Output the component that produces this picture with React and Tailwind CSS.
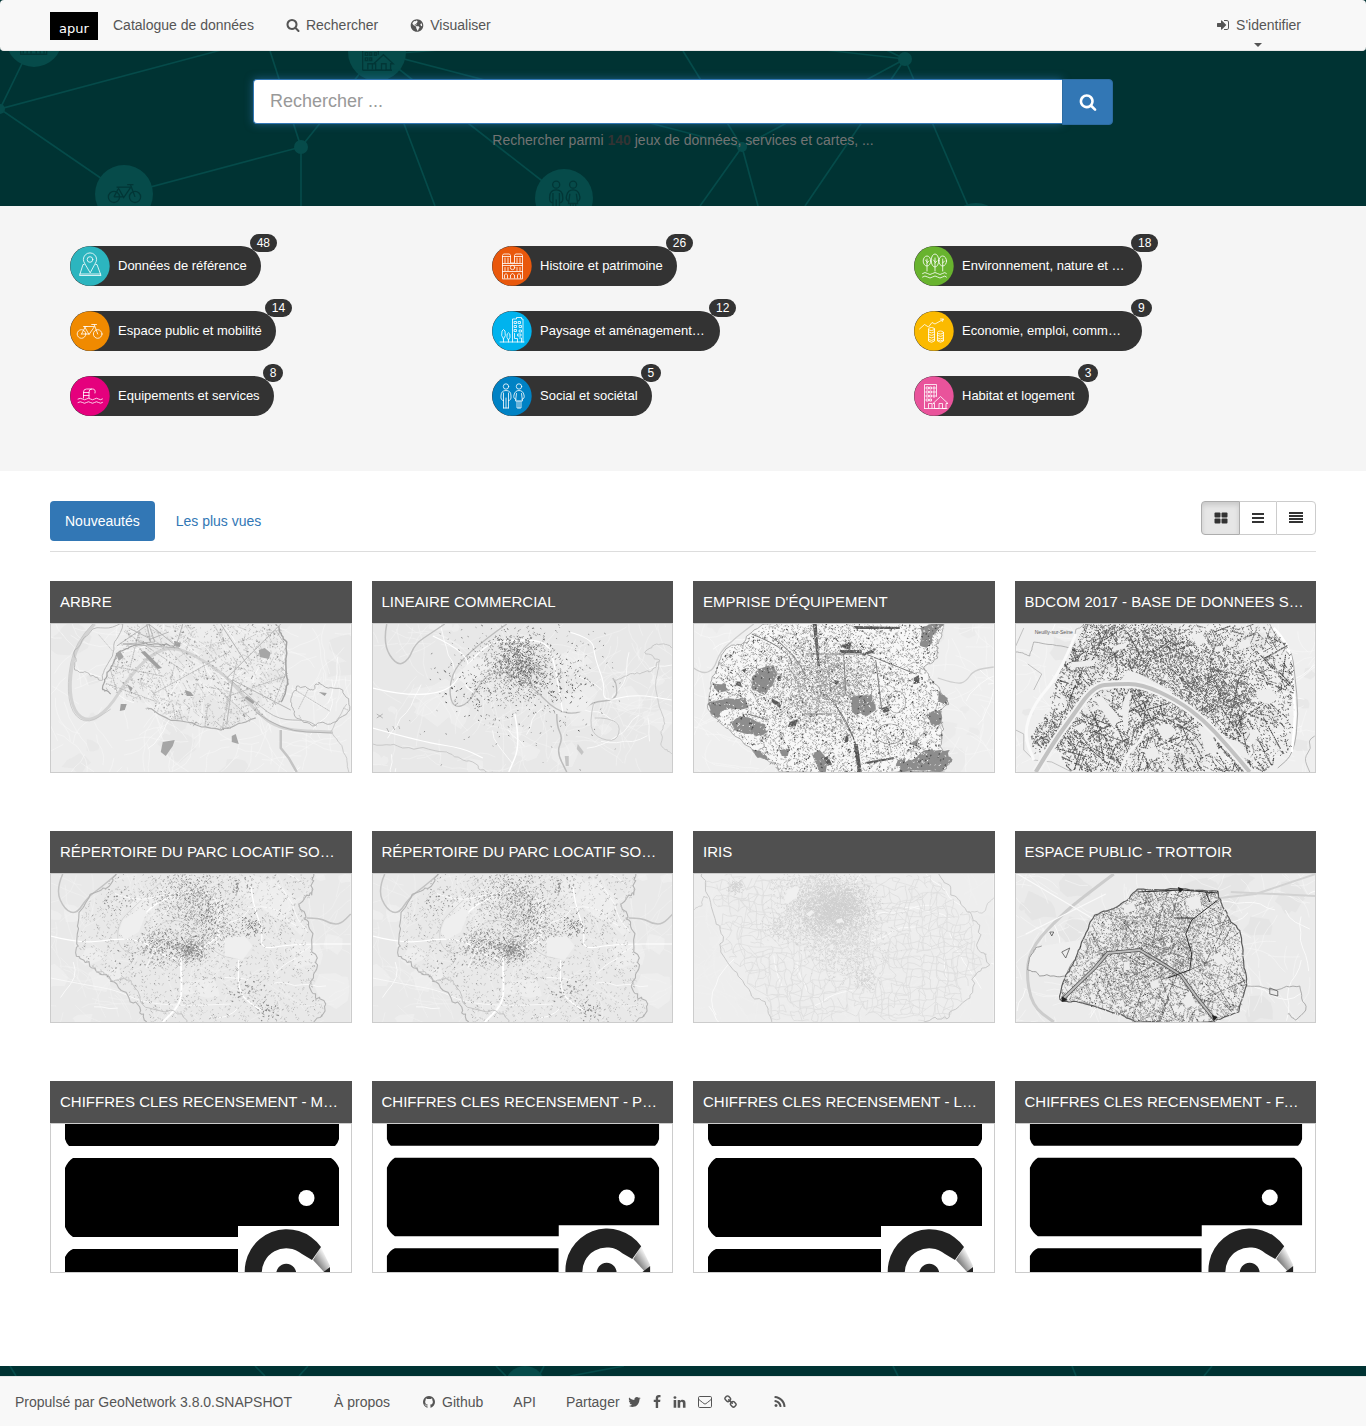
import React from "react";
import { FaGlobeAmericas } from "react-icons/fa";

/* ---------- glyph icons ---------- */

const GLYPHS = {
  search:
    "M1216 832q0-185-131.5-316.5t-316.5-131.5-316.5 131.5-131.5 316.5 131.5 316.5 316.5 131.5 316.5-131.5 131.5-316.5zm512 832q0 52-38 90t-90 38q-54 0-90-38l-343-342q-179 124-399 124-143 0-273.5-55.5t-225-150-150-225-55.5-273.5 55.5-273.5 150-225 225-150 273.5-55.5 273.5 55.5 225 150 150 225 55.5 273.5q0 220-124 399l343 343q37 37 37 90z",
  signIn:
    "M1312 896q0 26-19 45l-544 544q-19 19-45 19t-45-19-19-45v-288h-448q-26 0-45-19t-19-45v-384q0-26 19-45t45-19h448v-288q0-26 19-45t45-19 45 19l544 544q19 19 19 45zm352-352v704q0 119-84.5 203.5t-203.5 84.5h-320q-13 0-22.5-9.5t-9.5-22.5q0-4-1-20t-.5-26.5 3-23.5 10-19.5 20.5-6.5h320q66 0 113-47t47-113v-704q0-66-47-113t-113-47h-312l-11.5-1-11.5-3-8-5.5-7-9-2-13.5q0-4-1-20t-.5-26.5 3-23.5 10-19.5 20.5-6.5h320q119 0 203.5 84.5t84.5 203.5z",
  github:
    "M896 128q209 0 385.5 103t279.5 279.5 103 385.5q0 251-146.5 451.5t-378.5 277.5q-27 5-40-7t-13-30q0-3 .5-76.5t.5-134.5q0-97-52-142 57-6 102.5-18t94-39 81-66.5 53-105 20.5-150.5q0-119-79-206 37-91-8-204-28-9-81 11t-92 44l-38 24q-93-26-192-26t-192 26q-16-11-42.5-27t-83.5-38.5-85-13.5q-45 113-8 204-79 87-79 206 0 85 20.5 150t52.5 105 80.5 67 94 39 102.5 18q-39 36-49 103-21 10-45 15t-57 5-65.5-21.5-55.5-62.5q-19-32-48.5-52t-49.5-24l-20-3q-21 0-29 4.5t-5 11.5 9 14 13 12l7 5q22 10 43.5 38t31.5 51l10 23q13 38 44 61.5t67 30 69.5 7 55.5-3.5l23-4q0 38 .5 88.5t.5 54.5q0 18-13 30t-40 7q-232-77-378.5-277.5t-146.5-451.5q0-209 103-385.5t279.5-279.5 385.5-103z",
  twitter:
    "M1684 408q-67 98-162 167 1 14 1 42 0 130-38 259.5t-115.5 248.5-184.5 210.5-258 146-323 54.5q-271 0-496-145 35 4 78 4 225 0 401-138-105-2-188-64.5t-114-159.5q33 5 61 5 43 0 85-11-112-23-185.5-111.5t-73.5-205.5v-4q68 38 146 41-66-44-105-115t-39-154q0-88 44-163 121 149 294.5 238.5t371.5 99.5q-8-38-8-74 0-134 94.5-228.5t228.5-94.5q140 0 236 102 109-21 205-78-37 115-142 178 93-10 186-50z",
  facebook:
    "M1343 12v264h-157q-86 0-116 36t-30 108v189h293l-39 296h-254v759h-306v-759h-255v-296h255v-218q0-186 104-288.5t277-102.5q147 0 228 12z",
  linkedin:
    "M477 625v991h-330v-991h330zm21-306q1 73-50.5 122t-135.5 49h-2q-82 0-132-49t-50-122q0-74 51.5-122.5t134.5-48.5 133 48.5 51 122.5zm1166 729v568h-329v-530q0-105-40.5-164.5t-126.5-59.5q-63 0-105.5 34.5t-63.5 85.5q-11 30-11 81v553h-329q2-399 2-647t-1-296l-1-48h329v144h-2q20-32 41-56t56.5-52 87-43.5 114.5-15.5q171 0 275 113.5t104 332.5z",
  link: "M1520 1216q0-40-28-68l-208-208q-28-28-68-28-42 0-72 32 3 3 19 18.5t21.5 21.5 15 19 13 25.5 3.5 27.5q0 40-28 68t-68 28q-15 0-27.5-3.5t-25.5-13-19-15-21.5-21.5-18.5-19q-33 31-33 73 0 40 28 68l206 207q27 27 68 27 40 0 68-26l147-146q28-28 28-67zm-703-705q0-40-28-68l-206-207q-28-28-68-28-39 0-68 27l-147 146q-28 28-28 67 0 40 28 68l208 208q27 27 68 27 42 0 72-31-3-3-19-18.5t-21.5-21.5-15-19-13-25.5-3.5-27.5q0-40 28-68t68-28q15 0 27.5 3.5t25.5 13 19 15 21.5 21.5 18.5 19q33-31 33-73zm895 705q0 120-85 203l-147 146q-83 83-203 83-121 0-204-85l-206-207q-83-83-83-203 0-123 88-209l-88-88q-86 88-208 88-120 0-204-84l-208-208q-84-84-84-204t85-203l147-146q83-83 203-83 121 0 204 85l206 207q83 83 83 203 0 123-88 209l88 88q86-88 208-88 120 0 204 84l208 208q84 84 84 204z",
  rss: "M576 1344q0 80-56 136t-136 56-136-56-56-136 56-136 136-56 136 56 56 136zm512 123q2 28-17 48-18 21-47 21h-135q-25 0-43-16.5t-20-41.5q-22-229-184.5-391.5t-391.5-184.5q-25-2-41.5-20t-16.5-43v-135q0-29 21-47 17-17 43-17h5q160 13 306 80.5t259 181.5q114 113 181.5 259t80.5 306zm512 2q2 27-18 47-18 20-46 20h-143q-26 0-44.5-17.5t-19.5-42.5q-12-215-101-408.5t-231.5-336-336-231.5-408.5-102q-25-1-42.5-19.5t-17.5-43.5v-143q0-28 20-46 18-18 44-18h3q262 13 501.5 120t425.5 294q187 186 294 425.5t120 501.5z",
};

function Glyph({ name, className = "h-[14px] w-[18px]", box = "0 0 1792 1792" }) {
  return (
    <svg viewBox={box} className={`${className} shrink-0`} fill="currentColor" aria-hidden="true">
      <path d={GLYPHS[name]} />
    </svg>
  );
}

/* ---------- category drawings, 40 x 40 ---------- */

const DRAWINGS = {
  reference: (
    <>
      <path d="M20 26.500 15 18q-1.600-2.500-1.600-4.500a6.600 6.600 0 0 1 13.200 0q0 2-1.600 4.500z" />
      <circle cx="20" cy="13.500" r="2.800" />
      <path d="M14 18.500h-1L9.500 29.500h21.500L27 18.500h-1.200M10 28h20.500" />
    </>
  ),
  bike: (
    <>
      <circle cx="11.500" cy="23" r="4.300" />
      <circle cx="27.700" cy="23" r="4.300" />
      <path d="M11.500 23l4-7.500h9l-5.500 8-4.500-8M11.500 23h7.500M27.700 23l-3.500-9.500h-2.500M13.500 15.500h3.500M24.200 13.500h2.300" />
    </>
  ),
  pool: (
    <>
      <path d="M13.500 22v-6q0-3 3-3h6q3.500 0 2.500 4M19 22v-6q0-3 2.500-3M13.500 16.500h5.500M13.500 19.500h5.500" />
      <path d="M8 23q2.500-1.500 4.500 0t4 0 4 0 4 0 4 0 4 0M8 26.500q2.500-1.500 4.500 0t4 0 4 0 4 0 4 0 4 0" />
    </>
  ),
  church: (
    <>
      <path d="M10.500 32.500V9.500l1-1.500h6l1 1.500V17h4V9.500l1-1.500h6l1 1.500v23zM10.500 17.500h20M10.500 19.500h20M10.500 25.500h20M10.500 10.500h8M22.500 10.500h8M13 12v5M16 12v5M25 12v5M28 12v5" />
      <circle cx="20.500" cy="21.500" r="2.200" />
      <path d="M12.500 32v-3q1.500-3 3 0v3M18.500 32v-3q2-3 4 0v3M25.500 32v-3q1.500-3 3 0v3M13 21.500v3M16 21.500v3M25 21.500v3M28 21.500v3" />
    </>
  ),
  building: (
    <>
      <path d="M8 31h24M20.500 31V8h4V6.500h5V8H31v23" />
      <path d="M22.500 10.500h2v2h-2zM26.500 10.500h2v2h-2zM22.500 14.500h2v2h-2zM27.500 14.500h2v2h-2zM22.500 18.500h2v2h-2zM27.500 19h2v2h-2zM26 23h3v2h-3zM22.500 22.500v5h3v3.500M27.500 27h2v4" />
      <path d="M11.500 31v-3q-3-3-1.500-8 1.500-3 3 0 1.500 5-1.500 8M16.500 31v-2q-2.500-2.500-1.300-6 1.300-2.500 2.600 0 1.200 3.500-1.300 6" />
    </>
  ),
  people: (
    <>
      <circle cx="14" cy="10.500" r="2.700" />
      <circle cx="27" cy="10.500" r="2.700" />
      <path d="M11.500 32V17M16.500 32V17M14 22v10M11.500 32h5M11.500 24.500q-3 0-2.500-4.500 0-5.500 5-5.500t5 5.500q.5 4.500-2.500 4.500" />
      <path d="M25 25v7h4v-7M27 25v7M24.500 17.500l-1 7.500h7l-1-7.500M24 23.500q-3-1-2-4.500 1-4.500 5-4.500t5 4.500q1 3.500-2 4.500" />
    </>
  ),
  trees: (
    <>
      <ellipse cx="13" cy="15" rx="3.800" ry="5" />
      <ellipse cx="21" cy="14.500" rx="3.800" ry="6.500" />
      <ellipse cx="28.700" cy="15" rx="3.800" ry="5" />
      <path d="M13 13v12M21 12v13M28.700 13v12M13 17l1.800-2M21 17l1.800-2M28.700 17l1.800-2M13 16l-1.500-2M21 16l-1.500-2" />
      <path d="M8.500 27.500q2.500-2 5 0t5 0 5 0 5 0 4 0M8.500 31q2.500-2 5 0t5 0 5 0 5 0 4 0" />
    </>
  ),
  economy: (
    <>
      <path d="M5.500 18l5-4.500 4 2.500 3.500-4.500 3 1.500 8-4.500M26.500 8h3l-1.200 2.500" />
      <path d="M14.500 18.500v11.500q3 2.500 6 0V18.500M23.500 22v8q3 2.500 6 0v-8" />
      <ellipse cx="17.500" cy="18" rx="3" ry="1.500" />
      <ellipse cx="26.500" cy="21.500" rx="3" ry="1.500" />
      <path d="M14.500 21q3 2 6 0M14.500 23.500q3 2 6 0M14.500 26q3 2 6 0M14.500 28.500q3 2 6 0M23.500 24.500q3 2 6 0M23.500 27q3 2 6 0M23.500 29q3 2 6 0" />
    </>
  ),
  housing: (
    <>
      <path d="M10.500 32.500V8.500h12v12M10.500 32.500H33" />
      <path d="M12.500 11h2v2h-2zM16 11h1.500v2H16zM19.500 11h1.500v2h-1.500zM12.500 15h2v2h-2zM16 15h1.500v2H16zM19.500 15h1.500v2h-1.500zM12.500 19h2v2h-2zM16 19h1.500v2H16zM19.500 19h1.500v2h-1.500zM12.500 23h2v2h-2zM16 23h1.500v2H16z" />
      <path d="M19 27.500l7.500-7 7.500 7h-2v5h-3.500v-5H25v5h-4.500v-5zM14.500 32v-4.500h3.500v4.500" />
    </>
  ),
};

function Drawing({ name, color }) {
  return (
    <svg viewBox="0 0 40 40" className="size-10 shrink-0" aria-hidden="true">
      <circle cx="20" cy="20" r="19.700" fill={color} />
      <g fill="none" stroke="#fff" strokeOpacity="0.900" strokeWidth="0.900" strokeLinejoin="round" strokeLinecap="round">
        {DRAWINGS[name]}
      </g>
    </svg>
  );
}

/* ---------- network backdrop ---------- */

function NodeDrawing({ name, x, y }) {
  return (
    <g transform={`translate(${x - 26} ${y - 26}) scale(1.3)`} fill="none" stroke="#023636" strokeWidth="1">
      {DRAWINGS[name]}
    </g>
  );
}

function HeroNetwork() {
  return (
    <svg
      viewBox="0 0 1366 206"
      preserveAspectRatio="xMidYMin slice"
      className="absolute inset-0 h-full w-full"
      aria-hidden="true"
    >
      <path
        d="M0 109 34 39M0 109 240 45M0 109 124 194 301 147 270 51M301 147 377 52 742 147M301 147V206M377 52 564 198M377 52 435 206M124 194 190 230M400 53 440 50M683 51 742 147 700 206M742 147 758 206M742 147 905 59 805 206M905 59 825 50M905 59 880 47M905 59 968 206"
        fill="none"
        stroke="#054b4a"
        strokeWidth="1.700"
      />
      <g fill="#064b4a">
        <circle cx="34" cy="39" r="28" />
        <circle cx="377" cy="52" r="29" />
        <circle cx="124" cy="194" r="29" />
        <circle cx="564" cy="198" r="29" />
        <circle cx="976" cy="232" r="29" />
        <circle cx="0" cy="109" r="5" />
        <circle cx="301" cy="147" r="7" />
        <circle cx="742" cy="147" r="5" />
        <circle cx="905" cy="59" r="7" />
      </g>
      <NodeDrawing name="church" x={33} y={38} />
      <NodeDrawing name="housing" x={375} y={54} />
      <NodeDrawing name="bike" x={125} y={193} />
      <NodeDrawing name="people" x={564} y={197} />
    </svg>
  );
}

function StripNetwork() {
  return (
    <svg viewBox="0 0 1366 10" preserveAspectRatio="xMidYMin slice" className="h-[10px] w-full" aria-hidden="true">
      <path
        d="M10 0l6 10M255 0l10 10M308 0l-9 10M496 0l10 10M544 0l-5 10M624 0 570 10M893 0l5 10M1072 0l4 10M1212 0l-8 10"
        fill="none"
        stroke="#054b4a"
        strokeWidth="1.700"
      />
      <circle cx="525" cy="20" r="20" fill="#064b4a" />
    </svg>
  );
}

/* ---------- map thumbnails, 300 x 148 ---------- */

function rng(seed) {
  let a = seed;
  return () => {
    a = (a + 0x6d2b79f5) | 0;
    let t = Math.imul(a ^ (a >>> 15), 1 | a);
    t = (t + Math.imul(t ^ (t >>> 7), 61 | t)) ^ t;
    return ((t ^ (t >>> 14)) >>> 0) / 4294967296;
  };
}

const f1 = (n) => n.toFixed(1);

function inside(poly, x, y) {
  let hit = false;
  for (let i = 0, j = poly.length - 1; i < poly.length; j = i++) {
    const [xi, yi] = poly[i];
    const [xj, yj] = poly[j];
    if (yi > y !== yj > y && x < ((xj - xi) * (y - yi)) / (yj - yi) + xi) hit = !hit;
  }
  return hit;
}

function jagged(points, amp, seed, close) {
  const r = rng(seed);
  let pts = close ? [...points, points[0]] : points;
  for (let k = 0, a = amp; k < 3; k++, a /= 1.6) {
    const next = [pts[0]];
    for (let i = 1; i < pts.length; i++) {
      const [x0, y0] = pts[i - 1];
      const [x1, y1] = pts[i];
      next.push([(x0 + x1) / 2 + (r() - 0.5) * a, (y0 + y1) / 2 + (r() - 0.5) * a], [x1, y1]);
    }
    pts = next;
  }
  return "M" + pts.map(([x, y]) => `${f1(x)} ${f1(y)}`).join("L");
}

function smooth(points) {
  let d = `M${points[0][0]} ${points[0][1]}`;
  for (let i = 1; i < points.length - 1; i++) {
    const [x, y] = points[i];
    const [nx, ny] = points[i + 1];
    d += `Q${x} ${y} ${(x + nx) / 2} ${(y + ny) / 2}`;
  }
  const end = points[points.length - 1];
  return d + `L${end[0]} ${end[1]}`;
}

function roads(seed, count) {
  const r = rng(seed);
  let d = "";
  for (let i = 0; i < count; i++) {
    let x = r() * 300;
    let y = r() * 148;
    let a = r() * 6.28;
    d += `M${f1(x)} ${f1(y)}`;
    const steps = 3 + Math.floor(r() * 6);
    for (let k = 0; k < steps; k++) {
      a += (r() - 0.5) * 0.8;
      x += Math.cos(a) * 8;
      y += Math.sin(a) * 8;
      d += `L${f1(x)} ${f1(y)}`;
    }
  }
  return d;
}

function patches(seed, count) {
  const r = rng(seed);
  let d = "";
  for (let i = 0; i < count; i++) {
    const cx = r() * 300;
    const cy = r() * 148;
    const s = 4 + r() * 14;
    for (let k = 0; k < 9; k++) {
      const a = (k / 9) * 6.28;
      const q = s * (0.5 + r() * 0.7);
      d += `${k ? "L" : "M"}${f1(cx + Math.cos(a) * q * 1.3)} ${f1(cy + Math.sin(a) * q)}`;
    }
    d += "z";
  }
  return d;
}

/* Specks spread over a polygon, optionally pulled to centres [x, y, spread]. */
function specks(seed, count, poly, centres) {
  const r = rng(seed);
  let d = "";
  for (let i = 0; i < count; i++) {
    let x = r() * 300;
    let y = r() * 148;
    if (centres) {
      const c = centres[Math.floor(r() * centres.length)];
      const g = () => r() + r() + r() - 1.5;
      x = c[0] + g() * c[2];
      y = c[1] + g() * c[2] * 0.8;
    }
    if (y < 0 || y > 148 || (poly && !inside(poly, x, y))) continue;
    const a = r() < 0.5 ? 0.5 : 2.1;
    const l = 0.6 + r() * 1.3;
    d += `M${f1(x)} ${f1(y)}l${f1(Math.cos(a) * l)} ${f1(Math.sin(a) * l)}`;
  }
  return d;
}

/* Straight broken streets inside a polygon. */
function streets(seed, count, poly, length, fill) {
  const r = rng(seed);
  const angles = [0.4, 1.9, 1.2, 2.7, 0.9];
  let d = "";
  for (let i = 0; i < count; i++) {
    let x = r() * 300;
    let y = r() * 148;
    const a = angles[Math.floor(r() * 5)] + (r() - 0.5) * 0.4;
    const n = length * (0.4 + r());
    for (let k = 0; k < n; k += 2) {
      const nx = x + Math.cos(a) * 2;
      const ny = y + Math.sin(a) * 2;
      if (r() < fill && inside(poly, x, y) && inside(poly, nx, ny)) {
        d += `M${f1(x)} ${f1(y)}L${f1(x + (nx - x) * 0.8)} ${f1(y + (ny - y) * 0.8)}`;
      }
      x = nx;
      y = ny;
    }
  }
  return d;
}

/* Irregular cells: a jittered lattice with some edges left out. */
function mesh(seed, step, poly) {
  const r = rng(seed);
  const cols = Math.ceil(300 / step) + 1;
  const rows = Math.ceil(148 / step) + 1;
  const p = [];
  for (let j = 0; j <= rows; j++) {
    p.push([]);
    for (let i = 0; i <= cols; i++) p[j].push([(i + (r() - 0.5) * 0.95) * step, (j + (r() - 0.5) * 0.95) * step]);
  }
  let d = "";
  const seg = (a, b) => {
    if (r() < 0.25 || !inside(poly, a[0], a[1]) || !inside(poly, b[0], b[1])) return;
    const mx = (a[0] + b[0]) / 2 + (r() - 0.5) * 2.5;
    const my = (a[1] + b[1]) / 2 + (r() - 0.5) * 2.5;
    d += `M${f1(a[0])} ${f1(a[1])}L${f1(mx)} ${f1(my)}L${f1(b[0])} ${f1(b[1])}`;
  };
  for (let j = 0; j < rows; j++)
    for (let i = 0; i < cols; i++) {
      seg(p[j][i], p[j][i + 1]);
      seg(p[j][i], p[j + 1][i]);
    }
  return d;
}

function MapFrame({ base = "#ececec", patch = "#e4e4e4", road = "#f8f8f8", seed, label, children }) {
  return (
    <svg
      viewBox="0 0 300 148"
      preserveAspectRatio="xMidYMid slice"
      className="block h-full w-full"
      role="img"
      aria-label={label}
      fill="none"
      strokeLinejoin="round"
    >
      <rect width="300" height="148" fill={base} />
      <path d={patches(seed, 28)} fill={patch} fillOpacity="0.700" />
      <path d={roads(seed + 1, 150)} stroke={road} strokeWidth="0.500" />
      <path d={roads(seed + 2, 14)} stroke="#fafafa" strokeWidth="1" />
      {children}
    </svg>
  );
}

const TREE_CITY = [[75, 0], [228, 0], [236, 20], [238, 60], [230, 78], [205, 95], [170, 107], [130, 98], [95, 85], [72, 72], [52, 66], [56, 50], [68, 25]];
const WOOD_WEST = [[42, 5], [72, 0], [62, 30], [52, 56], [40, 52], [24, 46], [24, 26]];
const WOOD_EAST = [[240, 78], [246, 62], [262, 66], [268, 58], [292, 66], [299, 86], [280, 100], [262, 102], [244, 92]];

function TreeMap({ label }) {
  return (
    <MapFrame seed={11} base="#ededed" patch="#e6e6e6" label={label}>
      <path d={smooth([[44, 0], [26, 18], [18, 60], [23, 88], [38, 98], [58, 85], [76, 56], [100, 30], [124, 22], [156, 38], [182, 58], [205, 88], [230, 106], [282, 108]])} stroke="#d3d3d3" strokeWidth="3" />
      <path d={smooth([[42, 0], [24, 18], [16, 60], [21, 90], [38, 100], [60, 85]])} stroke="#bdbdbd" strokeWidth="0.700" />
      <path d={smooth([[205, 88], [230, 107], [282, 109]])} stroke="#b2b2b2" strokeWidth="1" />
      <path d="M230 106 230 124 238 134 246 148" stroke="#c4c4c4" strokeWidth="2.500" />
      <path d={jagged([[296, 80], [280, 108], [292, 125], [298, 148]], 4, 3)} stroke="#cbcbcb" strokeWidth="1" />
      <path d={streets(21, 420, TREE_CITY, 18, 0.7)} stroke="#bdbdbd" strokeWidth="0.700" />
      <path d={streets(22, 60, TREE_CITY, 70, 0.95)} stroke="#afafaf" strokeWidth="0.800" />
      <path d={specks(23, 2600, TREE_CITY)} stroke="#bababa" strokeWidth="0.900" />
      <path d={specks(24, 520, TREE_CITY)} stroke="#949494" strokeWidth="1.100" />
      <path d={streets(25, 26, WOOD_WEST, 40, 1)} stroke="#bfbfbf" strokeWidth="0.700" />
      <path d={jagged(WOOD_WEST, 5, 5, true)} stroke="#b5b5b5" strokeWidth="0.900" />
      <path d={streets(26, 50, WOOD_EAST, 40, 1)} stroke="#b9b9b9" strokeWidth="0.800" />
      <path d={jagged(WOOD_EAST, 5, 6, true)} stroke="#aeaeae" strokeWidth="0.900" />
      <path d={jagged([[60, 70], [52, 62], [60, 45], [66, 30], [82, 22], [108, 20], [124, 24]], 5, 8)} stroke="#a3a3a3" strokeWidth="1.200" />
      <path d={jagged([[228, 2], [236, 18], [237, 60], [230, 78]], 4, 9)} stroke="#a3a3a3" strokeWidth="1.500" />
      <path d={jagged([[96, 84], [130, 97], [170, 106], [205, 94]], 5, 10)} stroke="#b0b0b0" strokeWidth="1.200" />
      <path d={smooth([[180, 56], [206, 80], [228, 96], [256, 96], [266, 102]])} stroke="#bcbcbc" strokeWidth="1" />
      <path d="M112 118l12-2-2 6-7 10-5-4zM208 26l6-2 6 5-2 6-9-2zM181 112l4-2 3 10-7-2zM65 29l5-1 3 5-5 4z" fill="#a6a6a6" />
      <path d="M124 17l6 2-1 4-6-1zM90 28l4-1 17 17-4 1zM134 66l6 2 3 4-7 0zM196 72l8 6-2 2-8-6zM268 68l8 1-2 3zM76 60l6 4-2 4zM70 80l6 0-2 6-5 1z" fill="#a0a0a0" />
      <path d="M66 22 98 0 104 18 72 20 128 24 98 0M100 18 96 0M100 15 78 4M100 15 118 8M132 0 126 20M170 0 196 40M176 54 230 0M182 56 240 86M182 56 176 100" stroke="#b0b0b0" strokeWidth="0.900" />
    </MapFrame>
  );
}

function ShopMap({ label }) {
  return (
    <MapFrame seed={41} base="#e8e8e8" patch="#efefef" road="#f5f5f5" label={label}>
      <path d={smooth([[14, 0], [10, 20], [24, 42], [36, 36], [42, 20], [60, 8], [72, 0]])} stroke="#c0c0c0" strokeWidth="1.500" />
      <path d={smooth([[134, 0], [114, 14], [84, 40], [76, 63], [80, 84], [96, 80], [111, 52], [131, 46], [157, 60], [184, 88], [207, 90], [218, 78], [244, 76], [244, 60], [240, 54]])} stroke="#bcbcbc" strokeWidth="1.300" />
      <path d={jagged([[240, 56], [262, 50], [276, 48], [287, 36], [272, 28], [284, 20], [299, 24]], 5, 2)} stroke="#c4c4c4" strokeWidth="0.900" />
      <path d={jagged([[287, 36], [284, 70], [292, 100], [288, 120], [299, 130]], 5, 12)} stroke="#c9c9c9" strokeWidth="0.900" />
      <path d={smooth([[184, 90], [184, 102], [190, 114], [184, 128], [194, 148]])} stroke="#bcbcbc" strokeWidth="1.500" />
      <path d={smooth([[221, 78], [216, 100], [224, 114], [244, 118], [248, 100], [234, 94], [222, 94]])} stroke="#c9c9c9" strokeWidth="1" />
      <path d={jagged([[0, 120], [30, 124], [74, 128], [100, 138], [120, 148]], 6, 4)} stroke="#c9c9c9" strokeWidth="1" />
      <path d={smooth([[0, 64], [32, 72], [76, 68], [92, 44], [112, 22], [130, 16], [174, 16], [182, 40], [190, 88]])} stroke="#fff" strokeWidth="1.300" />
      <path d={smooth([[60, 12], [100, 30], [90, 60], [100, 68]])} stroke="#fff" strokeWidth="1.200" />
      <path d={smooth([[142, 90], [148, 120], [136, 148]])} stroke="#fff" strokeWidth="1.500" />
      <path d={smooth([[0, 104], [50, 118], [90, 124], [110, 134]])} stroke="#fff" strokeWidth="1.200" />
      <path d={smooth([[196, 8], [220, 14], [222, 34], [232, 60], [230, 78], [262, 70], [299, 76]])} stroke="#fff" strokeWidth="1.100" />
      <path d="M100 36l16-4-8 20-16 8-10-8zM192 70l18-2 10 10-10 10-18-2z" fill="#efefef" />
      <path d={specks(51, 620, null, [[145, 42, 36]])} stroke="#858585" strokeWidth="0.800" />
      <path d={specks(52, 420, null, [[150, 48, 22], [142, 26, 24]])} stroke="#5e5e5e" strokeWidth="0.900" />
      <path d={specks(53, 480, null, [[145, 48, 75]])} stroke="#828282" strokeWidth="0.900" />
      <path d={specks(54, 160, null, [[170, 55, 50], [95, 70, 30], [190, 60, 24]])} stroke="#555" strokeWidth="1" />
      <path d={specks(55, 50, null, [[160, 70, 150]])} stroke="#888" strokeWidth="0.900" />
      <path d="M205 120l6 8-2 3-5-6zM192 132l4 0v10h-3z" fill="#c4c4c4" />
      <path d="M4 90l6 4M4 94l6-4M14 104l2 4M20 102l2 4M26 102l1 3" stroke="#aaa" strokeWidth="0.800" />
    </MapFrame>
  );
}

const EQUIP = [[71, 0], [52, 16], [40, 21], [25, 38], [18, 56], [15, 76], [20, 93], [36, 106], [56, 123], [76, 138], [86, 148], [250, 148], [256, 136], [246, 123], [250, 105], [246, 90], [255, 80], [245, 63], [236, 54], [230, 43], [244, 34], [245, 18], [250, 0]];

function EquipmentMap({ label }) {
  return (
    <MapFrame seed={71} base="#efefef" patch="#eaeaea" label={label}>
      <path d={smooth([[0, 44], [8, 50], [20, 46], [26, 28], [44, 12], [60, 0]])} stroke="#cdcdcd" strokeWidth="1.300" />
      <path d={smooth([[244, 54], [262, 60], [272, 58], [280, 46], [300, 43]])} stroke="#cfcfcf" strokeWidth="1.300" />
      <path d={jagged(EQUIP, 5, 12, true)} fill="#f8f8f8" stroke="#999" strokeWidth="0.800" />
      <g fill="#8d8d8d">
        <path d={jagged([[62, 48], [80, 42], [84, 50], [72, 70], [58, 66], [58, 54]], 4, 1, true)} />
        <path d={jagged([[156, 74], [178, 70], [182, 84], [172, 92], [158, 88]], 4, 2, true)} />
        <path d={jagged([[16, 78], [52, 74], [54, 84], [30, 86], [24, 94], [16, 88]], 4, 3, true)} />
        <path d={jagged([[36, 98], [46, 92], [70, 100], [74, 108], [62, 112], [40, 106]], 4, 4, true)} />
        <path d={jagged([[208, 140], [232, 126], [256, 126], [258, 138], [246, 148], [202, 148]], 5, 5, true)} />
        <path d={jagged([[226, 4], [250, 0], [240, 10], [236, 22], [226, 20]], 4, 6, true)} />
        <path d={jagged([[232, 92], [246, 86], [248, 100], [240, 102]], 3, 7, true)} />
        <path d={jagged([[244, 66], [254, 74], [254, 82], [244, 78]], 3, 8, true)} />
        <path d={jagged([[18, 58], [32, 60], [36, 66], [24, 68]], 3, 9, true)} />
        <path d={jagged([[56, 122], [68, 128], [78, 136], [64, 134]], 3, 10, true)} />
        <path d="M118 130l8-4 8 10-2 12h-6zM86 126l10-2-2 8h-6zM216 120l10-6-4 8zM204 136l8-2-2 8h-8z" />
      </g>
      <g fill="#595959">
        <path d="M146 22l12-4-2 8zM119 0h4l3 42h-2zM144 26h24v3h-20zM168 30l14-6-2 4-10 4zM96 98l8-3-2 7-8 1zM48 46l5-2-2 5zM42 57l5 1 1 5-6-2zM220 54l5-3 1 8-6 1zM188 84l6-2 2 5-6 2zM152 112l4-2-2 8-4 1zM130 134l4-2 4 8-4 2zM160 120h4l4 28h-4zM172 138l28-5v2l-26 5zM78 74l10 6-2 4-8-6zM140 56l6 1-3 4zM84 52h3v5h-3zM160 2l46 1v2h-46z" />
      </g>
      <path d="M132 70q20 20 30 50M138 74l22 40M76 12q26 16 36 40M112 30h60l50 20M150 30l2 40M182 36l6 50M58 10q40 16 40 30M112 90h26M54 90l20 6" stroke="#6b6b6b" strokeWidth="0.900" />
      <ellipse cx="203" cy="78" rx="9" ry="11" stroke="#8a8a8a" strokeWidth="0.700" />
      <ellipse cx="196" cy="110" rx="14" ry="10" stroke="#8a8a8a" strokeWidth="0.800" />
      <path d={specks(81, 7800, EQUIP)} stroke="#8c8c8c" strokeWidth="0.800" />
      <path d={specks(82, 1000, EQUIP)} stroke="#4a4a4a" strokeWidth="1.200" />
      <path d={specks(83, 2600, EQUIP, [[110, 60, 55], [140, 60, 50]])} stroke="#8f8f8f" strokeWidth="0.800" />
      <path d={streets(84, 130, EQUIP, 16, 0.8)} stroke="#8a8a8a" strokeWidth="0.600" />
      <path d={specks(85, 1400, EQUIP)} stroke="#f8f8f8" strokeWidth="1" />
    </MapFrame>
  );
}

const BDCOM_CITY = [[68, 0], [54, 30], [41, 53], [30, 90], [13, 113], [18, 130], [40, 124], [54, 148], [250, 148], [274, 126], [279, 73], [276, 26], [254, 0]];

function BdcomMap({ label }) {
  const river = smooth([[20, 148], [38, 118], [54, 96], [78, 62], [100, 60], [126, 60], [161, 76], [188, 96], [212, 122], [234, 148]]);
  return (
    <MapFrame seed={101} base="#efefef" patch="#e6e6e6" label={label}>
      <path d={jagged([[0, 28], [14, 32], [18, 18], [54, 24], [60, 6], [68, 0]], 2, 1)} stroke="#a5a5a5" strokeWidth="0.800" />
      <path d="M8 4 0 22M12 40l14 10-8 16M0 106l8 4 0 16 10 10 18 2 20 10" stroke="#b5b5b5" strokeWidth="0.800" />
      <path d={smooth([[60, 10], [44, 50], [18, 80], [8, 110], [18, 136]])} stroke="#fafafa" strokeWidth="3" />
      <path d={smooth([[254, 0], [260, 14], [276, 26], [279, 50], [283, 90], [278, 130], [262, 144]])} stroke="#9c9c9c" strokeWidth="0.800" />
      <path d={smooth([[258, 4], [274, 20], [276, 50], [280, 90], [276, 128]])} stroke="#fff" strokeWidth="2.500" />
      <path d={streets(111, 640, BDCOM_CITY, 16, 0.72)} stroke="#606060" strokeWidth="0.900" />
      <path d={streets(112, 170, BDCOM_CITY, 50, 0.75)} stroke="#4a4a4a" strokeWidth="1.100" />
      <path d={specks(113, 3200, BDCOM_CITY)} stroke="#6a6a6a" strokeWidth="1" />
      <path d={specks(114, 3200, BDCOM_CITY, [[170, 40, 62], [130, 30, 55], [205, 70, 50]])} stroke="#666" strokeWidth="1" />
      <path d={specks(115, 1300, BDCOM_CITY, [[150, 95, 40], [80, 125, 40], [85, 10, 36], [40, 110, 30]])} stroke="#606060" strokeWidth="1" />
      <path d={specks(116, 1500, BDCOM_CITY)} stroke="#ededed" strokeWidth="1.200" />
      <g fill="#eee">
        <path d="M176 12l10-4 4 8-8 8zM112 46l12 4 34 18-6 6-28-14-20-2zM78 74l8-2 18 22-6 10zM142 104q6-8 14-2t-2 12q-10 2-12-10zM240 68q10-6 18 0t-4 12q-12 0-14-12zM182 100l12 6 10 22-14 2zM206 112l18 6 14 20-14-6zM106 84l4-14 4 2-2 34h-4zM98 22l14-4-2 6-14 4zM128 126l12-4 4 10-12 4zM56 38l24-2-2 6-24 2zM222 20l10-6 4 8-12 4zM234 104l10 6-10 14z" />
      </g>
      <path d={river} stroke="#f3f3f3" strokeWidth="8" />
      <path d={river} stroke="#c2c2c2" strokeWidth="4" />
      <path d={smooth([[104, 148], [112, 128], [124, 118], [128, 108]])} stroke="#f3f3f3" strokeWidth="3" />
      <text x="19" y="10" fontSize="5" fill="#555" fontFamily="Liberation Sans, sans-serif">Neuilly-sur-Seine</text>
      <path d={smooth([[299, 112], [292, 116], [296, 124], [288, 134], [294, 148]])} stroke="#ababab" strokeWidth="0.800" />
    </MapFrame>
  );
}

const METRO = [[65, 0], [52, 14], [32, 34], [26, 70], [33, 86], [46, 98], [66, 110], [85, 128], [96, 148], [263, 148], [275, 130], [261, 118], [266, 95], [261, 78], [256, 46], [248, 30], [261, 21], [263, 0]];

function HousingMap({ label }) {
  return (
    <MapFrame seed={141} base="#e9e9e9" patch="#f0f0f0" road="#f3f3f3" label={label}>
      <path d={smooth([[12, 0], [5, 16], [14, 36], [26, 40], [36, 24], [52, 12], [66, 0]])} stroke="#c3c3c3" strokeWidth="1.500" />
      <path d={smooth([[256, 44], [270, 44], [280, 50], [290, 50], [300, 40]])} stroke="#c3c3c3" strokeWidth="1.500" />
      <path d={smooth([[110, 8], [82, 34], [68, 48], [66, 70], [80, 82], [98, 72], [106, 50], [128, 44], [150, 62], [170, 84], [198, 84]])} stroke="#d5d5d5" strokeWidth="1" />
      <path d={smooth([[84, 58], [90, 44], [104, 30], [118, 24]])} stroke="#fff" strokeWidth="1.500" />
      <path d={smooth([[0, 62], [30, 70], [70, 64], [96, 68], [122, 88], [150, 76], [170, 60]])} stroke="#fff" strokeWidth="1.200" />
      <path d={smooth([[130, 84], [131, 110], [130, 130], [112, 148]])} stroke="#fff" strokeWidth="2" />
      <path d={smooth([[60, 18], [84, 28], [116, 20], [160, 16], [170, 38], [166, 70]])} stroke="#fafafa" strokeWidth="1.200" />
      <path d={smooth([[200, 10], [202, 30], [212, 56], [210, 76], [240, 70], [300, 70]])} stroke="#fff" strokeWidth="1.200" />
      <path d={smooth([[188, 86], [186, 116], [200, 130], [214, 138]])} stroke="#fff" strokeWidth="1.200" />
      <path d={smooth([[0, 104], [30, 110], [66, 116], [90, 128], [130, 132], [180, 130]])} stroke="#f8f8f8" strokeWidth="1" />
      <path d={jagged(METRO.slice(0, 9), 9, 4)} stroke="#b3b3b3" strokeWidth="1.100" />
      <path d={jagged(METRO.slice(9), 9, 5)} stroke="#b3b3b3" strokeWidth="1.100" />
      <path d={jagged([[46, 98], [60, 106], [78, 106], [90, 128], [120, 136], [136, 148]], 7, 6)} stroke="#c0c0c0" strokeWidth="0.900" />
      <path d={specks(151, 2600, METRO)} stroke="#c4c4c4" strokeWidth="1" />
      <path d={specks(152, 420, METRO)} stroke="#9a9a9a" strokeWidth="1" />
      <path d={specks(153, 1300, METRO, [[152, 28, 34], [162, 52, 26], [140, 75, 18], [108, 68, 26], [130, 20, 34]])} stroke="#9c9c9c" strokeWidth="0.900" />
      <path d={specks(154, 420, METRO, [[148, 24, 28], [160, 46, 26], [140, 75, 15], [114, 70, 18], [202, 52, 12]])} stroke="#707070" strokeWidth="0.900" />
      <path d={specks(155, 160, METRO, [[68, 24, 18], [190, 10, 14], [194, 116, 16], [216, 135, 12], [90, 85, 24]])} stroke="#8a8a8a" strokeWidth="1.100" />
      <path d="M72 46l18-12 6 4-8 20-14 8-6-8zM174 64l20-2 8 10-10 14-18-4z" fill="#efefef" />
    </MapFrame>
  );
}

const REGION = [[8, 0], [14, 21], [25, 51], [27, 78], [51, 111], [72, 131], [78, 148], [230, 148], [253, 145], [274, 125], [278, 105], [296, 91], [284, 75], [286, 51], [274, 38], [257, 21], [245, 0]];

function IrisMap({ label }) {
  return (
    <MapFrame seed={171} base="#eeeeee" patch="#ececec" road="#f1f1f1" label={label}>
      <path d={mesh(181, 7, REGION)} stroke="#dbdbdb" strokeWidth="0.700" />
      <path d={mesh(182, 12, REGION)} stroke="#dedede" strokeWidth="0.700" />
      <path d={specks(183, 2600, REGION, [[130, 34, 42], [120, 12, 40], [150, 60, 42]])} stroke="#d6d6d6" strokeWidth="1" />
      <path d={specks(184, 1900, REGION, [[132, 40, 32], [150, 30, 28]])} stroke="#cfcfcf" strokeWidth="1" />
      <path d={specks(185, 480, REGION, [[84, 54, 16], [42, 12, 8], [172, 106, 12], [150, 90, 24]])} stroke="#d3d3d3" strokeWidth="1" />
      <path d="M94 16l8-4 4 2-4 10-8 6-4-2zM112 40l6-4 2 2-4 5zM142 46l6-2 2 4-6 1z" fill="#f0f0f0" />
      <path d={jagged(REGION.slice(0, 7), 8, 1)} stroke="#c8c8c8" strokeWidth="1" />
      <path d={jagged(REGION.slice(7), 8, 2)} stroke="#c8c8c8" strokeWidth="1" />
      <path d={jagged([[0, 36], [8, 32], [10, 22], [14, 24]], 3, 3)} stroke="#cdcdcd" strokeWidth="0.900" />
      <path d={jagged([[274, 38], [290, 38], [300, 24]], 4, 4)} stroke="#cfcfcf" strokeWidth="0.900" />
    </MapFrame>
  );
}

const PAVEMENT_CITY = [[122, 15], [165, 15], [202, 17], [206, 30], [215, 48], [225, 61], [228, 90], [231, 111], [223, 138], [198, 147], [153, 150], [120, 148], [95, 138], [62, 128], [44, 125], [50, 101], [60, 84], [69, 62], [79, 41], [104, 31]];

function PavementMap({ label }) {
  const river = "M46 126 79 94 92 79 124 76 144 88 165 101 180 122 200 147";
  return (
    <MapFrame seed={201} base="#ebebeb" patch="#e3e3e3" label={label}>
      <path d={smooth([[98, 0], [66, 24], [46, 41], [18, 70], [10, 95], [16, 132], [38, 148]])} stroke="#cccccc" strokeWidth="3" />
      <path d="M215 18 300 22M204 24 240 20 300 0" stroke="#d2d2d2" strokeWidth="2" />
      <path d="M2 0 120 70M10 60 90 20" stroke="#fafafa" strokeWidth="1.200" />
      <path d={jagged([[70, 65], [60, 84], [50, 102], [24, 102], [12, 96], [16, 80], [26, 72]], 4, 3)} fill="#efefef" stroke="#888" strokeWidth="0.800" />
      <path d={jagged([[230, 112], [260, 116], [284, 112], [290, 136], [280, 146], [272, 140]], 4, 4)} stroke="#9a9a9a" strokeWidth="0.800" />
      <path d="M254 114l8 3v5l-8-2zM34 58l4 0-2 4zM46 78l8-4-4 10z" stroke="#555" strokeWidth="0.800" />
      <path d={jagged(PAVEMENT_CITY, 3, 5, true)} fill="#eeeeee" stroke="#5a5a5a" strokeWidth="1.200" />
      <path d={streets(211, 1900, PAVEMENT_CITY, 9, 0.85)} stroke="#747474" strokeWidth="0.600" />
      <path d={streets(212, 120, PAVEMENT_CITY, 36, 0.85)} stroke="#4b4b4b" strokeWidth="0.800" />
      <path d={specks(213, 5200, PAVEMENT_CITY)} stroke="#747474" strokeWidth="0.700" />
      <path d={specks(214, 2600, PAVEMENT_CITY, [[150, 55, 58], [125, 90, 60]])} stroke="#707070" strokeWidth="0.700" />
      <path d={specks(215, 520, PAVEMENT_CITY)} stroke="#333" strokeWidth="0.900" />
      <path d={specks(216, 2400, PAVEMENT_CITY)} stroke="#f0f0f0" strokeWidth="1.100" />
      <path d="M196 82l8-4 6 10-8 4zM134 108l8-3 2 8-8 2zM108 88l6 0v8h-6zM166 128l8-12 6 14-8 4zM150 80l5 2-2 6zM108 32l10-4 2 8-12 4zM170 24l14-2 2 12-12 2z" fill="#ededed" />
      <path d={river} stroke="#555" strokeWidth="3.500" />
      <path d={river} stroke="#bdbdbd" strokeWidth="2" />
      <path d="M202 26 176 46 170 60 176 80 174 96 152 104M158 44h20M122 18l44-2 36 3M190 18l4 10" stroke="#2f2f2f" strokeWidth="1" />
      <path d="M162 13l6 2-4 4zM46 122l6 4-6 2zM196 141l6 2-4 4z" fill="#222" />
    </MapFrame>
  );
}

/* ---------- placeholder thumbnail ---------- */

function ServerPicture({ label, index }) {
  const shade = `shade-${index}`;
  return (
    <svg
      viewBox={index % 2 ? "0 0 302 149" : "0 0 300 148"}
      preserveAspectRatio="xMinYMin slice"
      className="block h-full w-full"
      role="img"
      aria-label={label}
    >
      <defs>
        <linearGradient id={shade} x1="0" y1="1" x2="1" y2="0">
          <stop offset="0.200" stopColor="#666" />
          <stop offset="0.750" stopColor="#fff" />
        </linearGradient>
      </defs>
      <rect width="304" height="152" fill="#fff" />
      <path d="M14 0h274v15q-1 4-4 7H18q-3-3-4-7z" />
      <path d="M22 34h258q5 3 8 10v69H22q-5-3-8-10V44q3-7 8-10zM22 125h165v27H14v-19q3-6 8-8z" />
      <circle cx="255.500" cy="74" r="8" fill="#fff" />
      <path d="M187 102h115v50H187z" fill="#fff" />
      <path d="M262 136 270 123 279 142 274 149z" fill={`url(#${shade})`} />
      <path d="M194 152a42 42 0 0 1 76-29l-9 13-10-6a24.500 24.500 0 0 0-40 22z" fill="#222" />
      <path d="M225.500 152a10 10 0 1 1 19.500 0zM270 150l9-7v9h-8z" fill="#222" />
    </svg>
  );
}

/* ---------- data ---------- */

const CATEGORIES = [
  { label: "Données de référence", count: 48, icon: "reference", color: "#2cb5bf" },
  { label: "Histoire et patrimoine", count: 26, icon: "church", color: "#e9580c" },
  { label: "Environnement, nature et ville", count: 18, icon: "trees", color: "#68b32e" },
  { label: "Espace public et mobilité", count: 14, icon: "bike", color: "#f08a00" },
  { label: "Paysage et aménagement urbain", count: 12, icon: "building", color: "#00b3ee" },
  { label: "Economie, emploi, commerce", count: 9, icon: "economy", color: "#fbba00" },
  { label: "Equipements et services", count: 8, icon: "pool", color: "#e5007d" },
  { label: "Social et sociétal", count: 5, icon: "people", color: "#0082c4" },
  { label: "Habitat et logement", count: 3, icon: "housing", color: "#e9539b" },
];

const RECORDS = [
  { title: "ARBRE", Picture: TreeMap },
  { title: "LINEAIRE COMMERCIAL", Picture: ShopMap },
  { title: "EMPRISE D'ÉQUIPEMENT", Picture: EquipmentMap },
  { title: "BDCOM 2017 - BASE DE DONNEES SUR", Picture: BdcomMap },
  { title: "RÉPERTOIRE DU PARC LOCATIF SOCIAL", Picture: HousingMap },
  { title: "RÉPERTOIRE DU PARC LOCATIF SOCIAL", Picture: HousingMap },
  { title: "IRIS", Picture: IrisMap },
  { title: "ESPACE PUBLIC - TROTTOIR", Picture: PavementMap },
  { title: "CHIFFRES CLES RECENSEMENT - MENAGES", Picture: ServerPicture },
  { title: "CHIFFRES CLES RECENSEMENT - POPULATION", Picture: ServerPicture },
  { title: "CHIFFRES CLES RECENSEMENT - LOGEMENTS", Picture: ServerPicture },
  { title: "CHIFFRES CLES RECENSEMENT - FAMILLES", Picture: ServerPicture },
];

/* ---------- page parts ---------- */

function NavBar() {
  return (
    <nav className="relative z-10 flex h-[51px] items-start justify-between rounded border-b border-[#e7e7e7] bg-[#f8f8f8] px-[50px] text-[#555]">
      <div className="flex items-start">
        <a href="#accueil" className="mt-3 flex h-7 w-12 items-end justify-center bg-black pb-[2px] font-['DejaVu_Sans'] text-[13px] leading-[18px] text-white">
          apur
        </a>
        <a href="#catalogue" className="px-[15px] py-[15px]">Catalogue de données</a>
        <a href="#rechercher" className="flex items-center gap-1 px-[15px] py-[15px]">
          <Glyph name="search" />
          Rechercher
        </a>
        <a href="#visualiser" className="flex items-center gap-1 px-[15px] py-[15px]">
          <FaGlobeAmericas className="h-[13px] w-[18px]" />
          Visualiser
        </a>
      </div>
      <button type="button" className="flex flex-col items-center gap-2 px-[15px] pt-[15px]">
        <span className="flex items-center gap-1">
          <Glyph name="signIn" />
          S'identifier
        </span>
        <span className="border-x-4 border-t-4 border-x-transparent border-t-[#555]" />
      </button>
    </nav>
  );
}

function Hero() {
  return (
    <header className="relative overflow-hidden">
      <HeroNetwork />
      <NavBar />
      <div className="relative px-5 pt-7 pb-14">
        <form className="mx-auto flex max-w-[860px] items-start" onSubmit={(e) => e.preventDefault()}>
          <input
            type="text"
            aria-label="Rechercher"
            placeholder="Rechercher ..."
            className="h-[45px] min-w-0 flex-1 rounded-l border border-r-0 border-[#3277b5] bg-white px-4 text-lg text-[#555] shadow-[0_0_8px_rgba(51,122,183,0.6)] outline-none placeholder:text-[#999]"
          />
          <button
            type="submit"
            aria-label="Lancer la recherche"
            className="relative flex h-[46px] w-[51px] items-center justify-center rounded-r border border-[#2d6ca2] bg-[#3277b5] text-white"
          >
            <Glyph name="search" className="size-[18px]" />
          </button>
        </form>
        <p className="mt-[5px] text-center text-[#737373]">
          Rechercher parmi <strong className="text-[#333]">140</strong> jeux de données, services et cartes, ...
        </p>
      </div>
    </header>
  );
}

function Categories() {
  return (
    <section className="bg-[#f5f5f5] px-[50px] pt-10 pb-[55px]">
      <ul className="grid grid-cols-3 gap-y-[25px]">
        {CATEGORIES.map((c) => (
          <li key={c.label} className="flex px-5">
            <a href="#categorie" className="relative flex h-10 items-center rounded-full bg-[#333] pr-[14px] text-[13px] text-white">
              <Drawing name={c.icon} color={c.color} />
              <span className="ml-2 max-w-[166px] truncate">{c.label}</span>
              <span className="absolute -top-3 left-full -ml-[11px] rounded-full bg-[#333] px-[7px] text-xs leading-[18px]">
                {c.count}
              </span>
            </a>
          </li>
        ))}
      </ul>
    </section>
  );
}

function ViewSwitch() {
  const base = "flex h-[34px] items-center justify-center border";
  return (
    <div className="flex">
      <button
        type="button"
        aria-label="Grille"
        aria-pressed="true"
        className={`${base} w-[39px] rounded-l border-[#adadad] bg-[#e6e6e6] shadow-[inset_0_3px_5px_rgba(0,0,0,0.125)]`}
      >
        <svg viewBox="0 0 14 14" className="size-[14px]" fill="currentColor" aria-hidden="true">
          <rect x="0.500" y="1.500" width="6" height="5" rx="1" />
          <rect x="7.500" y="1.500" width="6" height="5" rx="1" />
          <rect x="0.500" y="7.500" width="6" height="5" rx="1" />
          <rect x="7.500" y="7.500" width="6" height="5" rx="1" />
        </svg>
      </button>
      <button type="button" aria-label="Liste" aria-pressed="false" className={`${base} w-9 border-x-0 border-[#ccc] bg-white`}>
        <svg viewBox="0 0 12 14" className="h-[14px] w-3" fill="currentColor" aria-hidden="true">
          <path d="M0 2h12v2H0zM0 6h12v2H0zM0 10h12v2H0z" />
        </svg>
      </button>
      <button type="button" aria-label="Liste compacte" aria-pressed="false" className={`${base} w-10 rounded-r border-[#ccc] bg-white`}>
        <svg viewBox="0 0 14 14" className="size-[14px]" fill="currentColor" aria-hidden="true">
          <path d="M0 1h14v2H0zM0 4h14v2H0zM0 7h14v2H0zM0 10h14v2H0z" />
        </svg>
      </button>
    </div>
  );
}

function Records() {
  return (
    <main className="bg-white px-[50px] pt-[30px] pb-[93px]">
      <div className="flex items-start justify-between border-b border-[#ddd] pb-[10px]">
        <div className="flex gap-[6px]">
          <button type="button" aria-pressed="true" className="rounded bg-[#3277b5] px-[15px] py-[10px] text-white">
            Nouveautés
          </button>
          <button type="button" aria-pressed="false" className="rounded px-[15px] py-[10px] text-[#3277b5]">
            Les plus vues
          </button>
        </div>
        <ViewSwitch />
      </div>
      <div className="mt-[29px] grid grid-cols-4 gap-x-5 gap-y-[58px]">
        {RECORDS.map(({ title, Picture }, i) => (
          <a key={i} href="#fiche" className="block min-w-0">
            <h3 className="truncate bg-[#505050] px-[10px] py-[11px] text-[15px] text-white">{title}</h3>
            <div className="h-[150px] overflow-hidden border border-[#ccc]">
              <Picture label={title} index={i} />
            </div>
          </a>
        ))}
      </div>
    </main>
  );
}

function Footer() {
  return (
    <footer className="flex h-[50px] items-center border-t border-[#e7e7e7] bg-[#f8f8f8] px-[15px] text-[#555]">
      <span>Propulsé par GeoNetwork 3.8.0.SNAPSHOT</span>
      <a href="#apropos" className="ml-[42px]">À propos</a>
      <a href="#github" className="ml-[30px] flex items-center gap-1">
        <Glyph name="github" />
        Github
      </a>
      <a href="#api" className="ml-[30px]">API</a>
      <div className="ml-[30px] flex items-center gap-3">
        <span className="-mr-1">Partager</span>
        <a href="#twitter" aria-label="Twitter">
          <Glyph name="twitter" className="h-[14px] w-[13px]" box="64 0 1664 1792" />
        </a>
        <a href="#facebook" aria-label="Facebook">
          <Glyph name="facebook" className="h-[14px] w-2" box="384 0 1024 1792" />
        </a>
        <a href="#linkedin" aria-label="LinkedIn">
          <Glyph name="linkedin" className="h-[14px] w-[13px]" box="64 0 1664 1792" />
        </a>
        <a href="#courriel" aria-label="Courriel">
          <svg viewBox="0 0 14 14" className="size-[14px]" fill="none" stroke="currentColor" aria-hidden="true">
            <rect x="0.500" y="1.500" width="13" height="11" rx="1.200" />
            <path d="M.5 4q1 1.200 4.200 3.600Q6.300 9 7 9t2.300-1.400Q12.500 5.200 13.500 4" />
          </svg>
        </a>
        <a href="#lien" aria-label="Lien permanent">
          <Glyph name="link" className="h-[14px] w-[13px]" box="64 0 1664 1792" />
        </a>
      </div>
      <a href="#rss" aria-label="RSS" className="ml-9">
        <Glyph name="rss" className="size-[14px]" />
      </a>
    </footer>
  );
}

export default function App() {
  return (
    <div className="bg-[#003333] font-['Liberation_Sans',Arial,sans-serif] text-sm leading-5 text-[#333]">
      <Hero />
      <Categories />
      <Records />
      <StripNetwork />
      <Footer />
    </div>
  );
}
